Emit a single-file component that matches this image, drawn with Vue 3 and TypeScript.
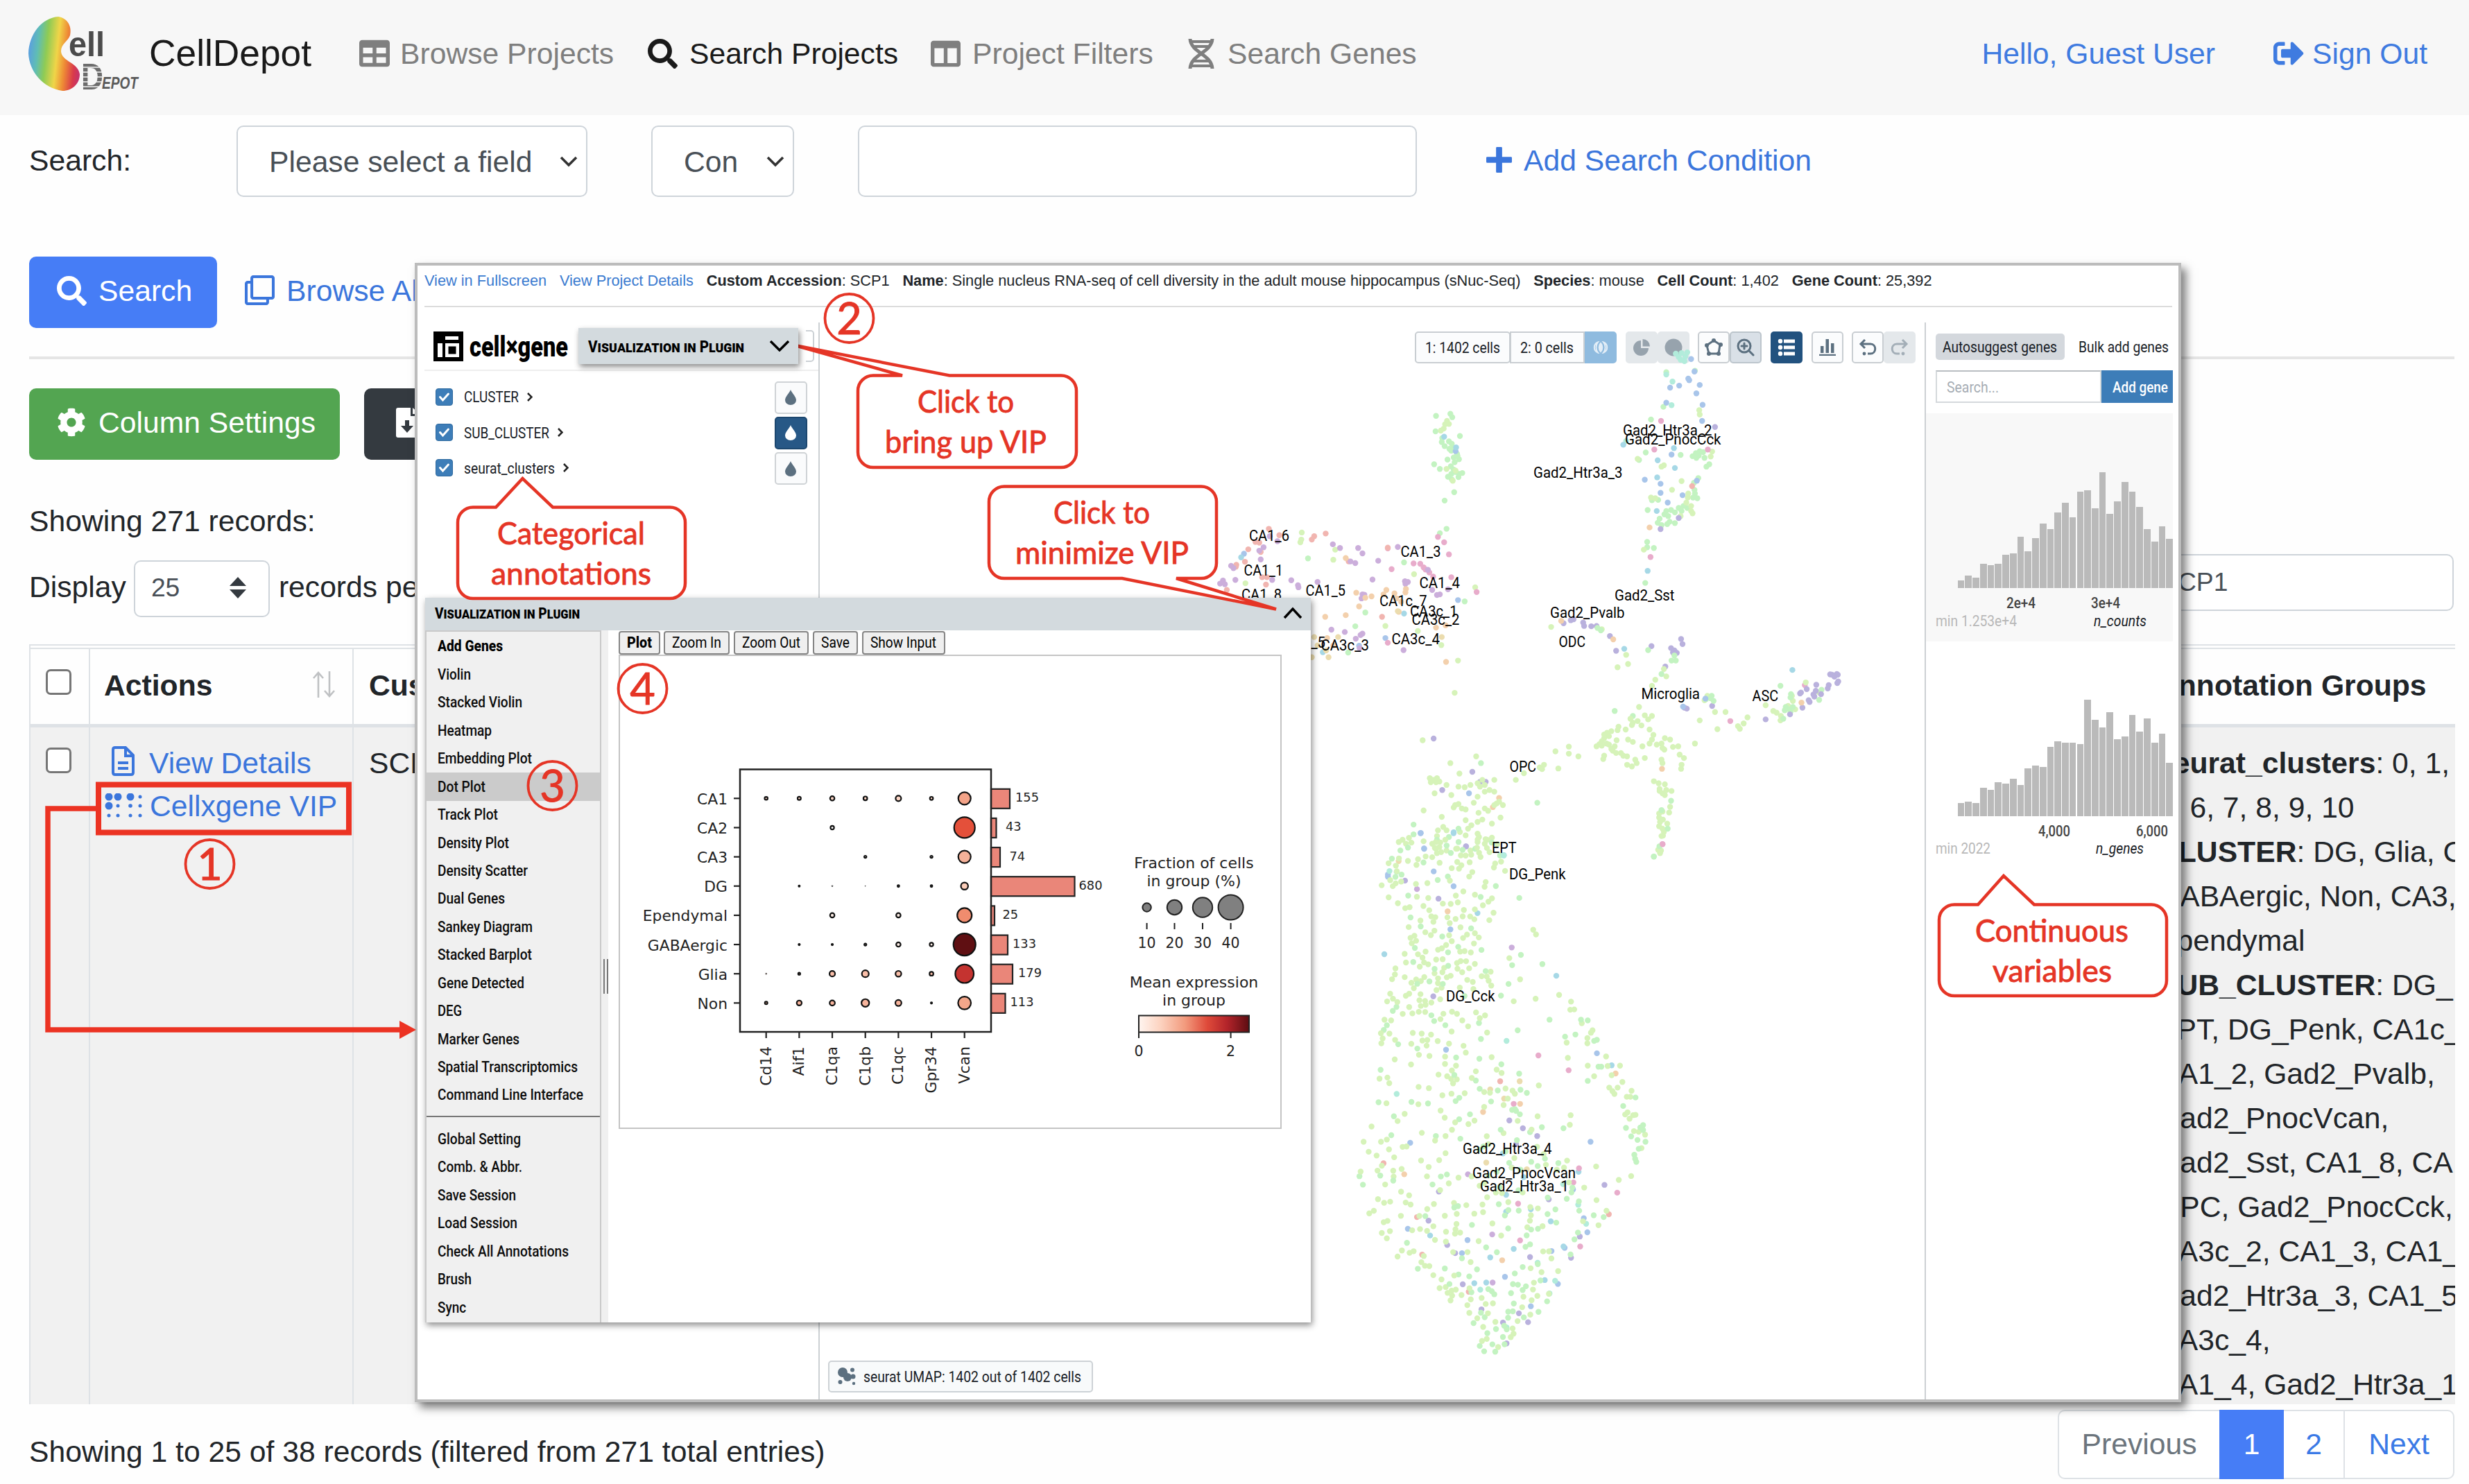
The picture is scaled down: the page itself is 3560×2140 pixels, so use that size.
<script setup lang="ts">
import { h, type FunctionalComponent } from 'vue'

/* Single-line label stretched to an exact advance width; its box is the cap height. */
const Fit: FunctionalComponent<{ t: string; w: number; s?: number }> = (p) => {
  const s = p.s ?? 22
  return h('svg', { width: p.w, height: s * 0.72, style: { overflow: 'visible', flex: 'none', display: 'block' } }, [
    h('text', { x: 0, y: s * 0.72, 'font-size': s, fill: 'currentColor', textLength: p.w, lengthAdjust: 'spacingAndGlyphs' }, p.t),
  ])
}
Fit.props = ['t', 'w', 's']

const faPaths: Record<string, string> = {
  search: 'M505 442.7L405.3 343c-4.5-4.5-10.6-7-17-7H372c27.6-35.3 44-79.7 44-128C416 93.1 322.9 0 208 0S0 93.1 0 208s93.1 208 208 208c48.3 0 92.7-16.4 128-44v16.3c0 6.4 2.5 12.5 7 17l99.7 99.7c9.4 9.4 24.6 9.4 33.9 0l28.3-28.3c9.4-9.4 9.4-24.6.1-34zM208 336c-70.7 0-128-57.2-128-128 0-70.7 57.2-128 128-128 70.7 0 128 57.2 128 128 0 70.7-57.2 128-128 128z',
  table: 'M464 32H48C21.49 32 0 53.49 0 80v352c0 26.51 21.49 48 48 48h416c26.51 0 48-21.49 48-48V80c0-26.51-21.49-48-48-48zM224 416H64v-96h160v96zm0-160H64v-96h160v96zm224 160H288v-96h160v96zm0-160H288v-96h160v96z',
  columns: 'M464 32H48C21.49 32 0 53.49 0 80v352c0 26.51 21.49 48 48 48h416c26.51 0 48-21.49 48-48V80c0-26.51-21.49-48-48-48zM224 416H64V160h160v256zm224 0H288V160h160v256z',
  cog: 'M487.4 315.7l-42.6-24.6c4.3-23.2 4.3-47 0-70.2l42.6-24.6c4.9-2.8 7.1-8.6 5.5-14-11.1-35.6-30-67.8-54.7-94.6-3.8-4.1-10-5.1-14.8-2.3L380.8 110c-17.9-15.4-38.5-27.3-60.8-35.1V25.8c0-5.6-3.9-10.5-9.4-11.7-36.7-8.2-74.3-7.8-109.2 0-5.5 1.2-9.4 6.1-9.4 11.7V75c-22.2 7.9-42.8 19.8-60.8 35.1L88.7 85.5c-4.9-2.8-11-1.9-14.8 2.3-24.7 26.7-43.6 58.9-54.7 94.6-1.7 5.4.6 11.2 5.5 14L67.3 221c-4.3 23.2-4.3 47 0 70.2l-42.6 24.6c-4.9 2.8-7.1 8.6-5.5 14 11.1 35.6 30 67.8 54.7 94.6 3.8 4.1 10 5.1 14.8 2.3l42.6-24.6c17.9 15.4 38.5 27.3 60.8 35.1v49.2c0 5.6 3.9 10.5 9.4 11.7 36.7 8.2 74.3 7.8 109.2 0 5.5-1.2 9.4-6.1 9.4-11.7v-49.2c22.2-7.9 42.8-19.8 60.8-35.1l42.6 24.6c4.9 2.8 11 1.9 14.8-2.3 24.7-26.7 43.6-58.9 54.7-94.6 1.5-5.5-.7-11.3-5.6-14.1zM256 336c-44.1 0-80-35.9-80-80s35.9-80 80-80 80 35.9 80 80-35.9 80-80 80z',
  signout: 'M497 273L329 441c-15 15-41 4.5-41-17v-96H152c-13.3 0-24-10.7-24-24v-96c0-13.3 10.7-24 24-24h136V88c0-21.4 25.9-32 41-17l168 168c9.3 9.4 9.3 24.6 0 34zM192 436v-40c0-6.6-5.4-12-12-12H96c-17.7 0-32-14.3-32-32V160c0-17.7 14.3-32 32-32h84c6.6 0 12-5.4 12-12V76c0-6.6-5.4-12-12-12H96c-53 0-96 43-96 96v192c0 53 43 96 96 96h84c6.6 0 12-5.4 12-12z',
  clone: 'M464 0H144c-26.51 0-48 21.49-48 48v48H48c-26.51 0-48 21.49-48 48v320c0 26.51 21.49 48 48 48h320c26.51 0 48-21.49 48-48v-48h48c26.51 0 48-21.49 48-48V48c0-26.51-21.49-48-48-48zM362 464H54a6 6 0 0 1-6-6V150a6 6 0 0 1 6-6h42v224c0 26.51 21.49 48 48 48h224v42a6 6 0 0 1-6 6zm96-96H150a6 6 0 0 1-6-6V54a6 6 0 0 1 6-6h308a6 6 0 0 1 6 6v308a6 6 0 0 1-6 6z',
  plus: 'M220 36h72q16 0 16 16v152h152q16 0 16 16v72q0 16-16 16H308v152q0 16-16 16h-72q-16 0-16-16V308H52q-16 0-16-16v-72q0-16 16-16h152V52q0-16 16-16z',
}
const Fa: FunctionalComponent<{ n: string; s?: number }> = (p) =>
  h('svg', { width: p.s ?? 43, height: p.s ?? 43, viewBox: '0 0 512 512', style: { flex: 'none', display: 'block' } }, [
    h('path', { d: faPaths[p.n], fill: 'currentColor' }),
  ])
Fa.props = ['n', 's']

const groups: { b?: string; t: string }[] = [
  { b: 'seurat_clusters', t: ': 0, 1,' },
  { t: '5, 6, 7, 8, 9, 10' },
  { b: 'CLUSTER', t: ': DG, Glia, C' },
  { t: 'GABAergic, Non, CA3,' },
  { t: 'Ependymal' },
  { b: 'SUB_CLUSTER', t: ': DG_' },
  { t: 'EPT, DG_Penk, CA1c_' },
  { t: 'CA1_2, Gad2_Pvalb,' },
  { t: 'Gad2_PnocVcan,' },
  { t: 'Gad2_Sst, CA1_8, CA' },
  { t: 'OPC, Gad2_PnocCck,' },
  { t: 'CA3c_2, CA1_3, CA1_' },
  { t: 'Gad2_Htr3a_3, CA1_5' },
  { t: 'CA3c_4,' },
  { t: 'CA1_4, Gad2_Htr3a_1' },
]

const menuTop: [string, number][] = [
  ['Add Genes', 94], ['Violin', 48], ['Stacked Violin', 122], ['Heatmap', 78], ['Embedding Plot', 136],
  ['Dot Plot', 69], ['Track Plot', 87], ['Density Plot', 103], ['Density Scatter', 130], ['Dual Genes', 97],
  ['Sankey Diagram', 137], ['Stacked Barplot', 136], ['Gene Detected', 125], ['DEG', 35], ['Marker Genes', 118],
  ['Spatial Transcriptomics', 202], ['Command Line Interface', 210],
]
const menuBottom: [string, number][] = [
  ['Global Setting', 120], ['Comb. & Abbr.', 122], ['Save Session', 113], ['Load Session', 115],
  ['Check All Annotations', 189], ['Brush', 49], ['Sync', 41],
]
const tools: [string, number, number][] = [
  ['Plot', 36, 59.5], ['Zoom In', 71, 95], ['Zoom Out', 84, 108.5], ['Save', 41, 65], ['Show Input', 95, 120],
]
const cats: [string, number][] = [['CLUSTER', 79], ['SUB_CLUSTER', 123], ['seurat_clusters', 131]]

/* Dot plot data: radius and fill per gene, group size in the bar */
const genes = ['Cd14', 'Aif1', 'C1qa', 'C1qb', 'C1qc', 'Gpr34', 'Vcan']
interface Row { n: string; c: number; bar: number; lx: number; r: number[]; f: string; tint: string }
const rows: Row[] = [
  { n: 'CA1', c: 155, bar: 27, lx: 1464, r: [2.2, 2.4, 3.2, 2.8, 4, 2.3, 9], f: '#f3a388', tint: '#fbd5c5' },
  { n: 'CA2', c: 43, bar: 7.5, lx: 1450, r: [0, 0, 2.6, 0, 0, 0, 15], f: '#e4503a', tint: '#fff' },
  { n: 'CA3', c: 74, bar: 13, lx: 1455.5, r: [0, 0, 0, 1.6, 0, 1.6, 9], f: '#f4b199', tint: '#fff' },
  { n: 'DG', c: 680, bar: 120.5, lx: 1555.5, r: [0, 0.9, 0.8, 0.4, 1.3, 1.3, 5.2], f: '#fbcdb9', tint: '#fff' },
  { n: 'Ependymal', c: 25, bar: 5, lx: 1445.5, r: [0, 0, 3.2, 0, 3.2, 0, 10.5], f: '#f08c6e', tint: '#fdeee6' },
  { n: 'GABAergic', c: 133, bar: 24, lx: 1460, r: [0, 1, 1, 1.5, 3.2, 2.6, 16], f: '#5f0f12', tint: '#fdeee6' },
  { n: 'Glia', c: 179, bar: 31, lx: 1468, r: [0.8, 1.5, 4, 5, 4.2, 2.8, 13.3], f: '#c43330', tint: '#f9bea8' },
  { n: 'Non', c: 113, bar: 20.5, lx: 1456.5, r: [1.9, 3.6, 3.8, 5.6, 4.4, 1, 9.3], f: '#f2a68a', tint: '#f7b49c' },
]
const rowY = (i: number) => 1151.3 + i * 42.15
const colX = (i: number) => 1104.7 + i * 47.67

/* Histogram bin heights */
const hCounts = [21, 36, 29, 68, 64, 68, 95, 99, 146, 103, 142, 182, 166, 214, 241, 201, 273, 277, 225, 328, 209, 245, 300, 273, 229, 166, 131, 174, 139]
const hGenes = [36, 40, 36, 79, 74, 96, 92, 104, 87, 134, 143, 139, 195, 211, 207, 207, 202, 328, 272, 250, 293, 216, 225, 285, 238, 276, 207, 233, 151]

/* UMAP embedding */
const hue: Record<string, string> = {
  g: '#d6f3b9', m: '#c3f3c1', t: '#b2ecdb', c: '#a6d8e6', b: '#a8c5ea', p: '#b9b1dd', v: '#cbaedb', k: '#e8accb', r: '#f1b5b0', o: '#f3d0ac', y: '#ebdcae',
}
type Pt = { x: number; y: number; c: string }
const pts: Pt[] = []
function add(src: string, ox: number, oy: number, sx: number, sy: number) {
  for (const line of src.trim().split('\n')) {
    const [k, ...rest] = line.trim().split(' ')
    for (const q of rest) {
      const [x, y] = q.split(',').map(Number)
      pts.push({ x: ox + x * sx, y: oy + y * sy, c: hue[k] })
    }
  }
}
add(`
m 538,247 568,241 572,251 537,293 588,307 551,313 550,325 556,337 565,323 571,330 575,343 570,351 582,360 586,376 562,377 575,371 583,366 566,345 577,385 534,391 546,405 569,397 575,407 579,414 570,420 563,428 571,436 593,417 586,420 585,429 576,474 556,499 560,583 546,596 270,671 471,683 369,873 390,832 598,799 354,951
g 561,262 557,272 565,271 554,285 548,291 579,410 573,440 257,594 254,623 256,615 327,645 323,675 620,757 139,745 492,718 432,872 500,887 549,929 584,975 577,1071 560,405
b 579,352 584,795 377,931 136,657 432,908
c 555,309 580,341 471,835 130,668 301,950
m 1020,117 1080,113 1014,220 988,258 977,356 963,378 1050,363 1075,367 1083,372 1090,352 1097,355 1088,365 1082,358 1100,372 1104,398 1110,391 1087,432 1078,446 1079,467 1080,478 1076,490 1085,492 990,498 1003,497 981,527 1020,530 1030,527 1046,521 1052,530 1038,534 1016,540 1024,545 1006,553 1002,565 1010,572 1022,569 1027,562 1038,566 1064,521 1056,515 980,622 994,640 980,638 976,744
g 1090,243 1089,230 1116,353 1113,368 1010,398 1015,394 1052,441 1032,467 1066,478 1065,490 1072,515 1072,530 1075,537 1062,505 988,490 997,492 973,645 1050,545 960,375
t 1040,62 1046,72 1052,60 1060,70 1064,58 1050,80 1020,124 1033,145 1031,215 936,322 1058,84
b 1079,115 1066,136 1068,141 1047,157 1028,163 1090,155 1083,180 1020,208 1096,214 1095,262 1031,362 975,437 1008,449 1008,476 1054,483 1023,505 1084,440 1072,78
c 930,333 1036,343 1038,402 1002,379 1001,430 1000,530 981,708 932,940 1284,1003
p 1046,551 1008,584 1122,280 989,932 1051,911 1054,926 1030,938 1037,945 1034,951 1042,952 1018,993 846,862 848,872 863,873 874,872 902,902 915,946 533,1207 614,1306 630,1336 642,1336 551,1360 1116,1110 826,852 820,855 805,864 1058,1115 1063,1118
k 1009,262 995,347 1107,347 987,667 565,659 542,607 623,771 491,686 505,687 516,704 524,713 532,725 512,698 437,641 437,922 555,623 1310,1048 1154,1155 570,727 445,703
r 1074,456 307,597 283,605 278,615 160,622 168,624 145,644 171,652 120,690 119,696 138,681 188,583 174,727 184,727 182,749 100,765 355,680 210,602 425,845 437,639 84,782
v 190,605 206,620 177,638 168,648 171,674 109,693 114,700 118,735 92,737 86,746 96,748 235,736 249,751 250,757 322,629 337,640 375,640 384,656 369,685 359,680 290,741 417,678 405,734 384,778 382,790 388,779 473,739 479,741 474,747 384,895 380,899 319,883 347,890 470,944 521,705 530,765 546,778 540,780 563,763 458,637 195,735 378,938 370,910
o 985,579 349,670 371,773 403,784 434,765 428,778 451,775 475,762 474,772 455,790 306,845 377,814 349,840 558,870 538,877 559,979 909,912 800,857 310,908 323,930 1011,1297 670,1384 657,1411 460,830 465,800 390,788
y 458,828 313,965 550,905 283,905 290,930 308,945 333,905 278,965
g 779,875 885,882 936,958 940,985 918,995 997,1032 1020,1022 1015,1000 990,1050 510,1212 622,1260 568,1280 788,1245 816,1231 816,1252 836,1260 794,1296 764,1285 755,1293 760,1298 722,1310 705,1330 587,1311
m 876,878 883,885 982,944 1040,975 1031,975 1037,960 1010,1015 632,1280 750,1398 912,1125 950,1140 1259,1050
g 963,1113 975,1138 990,1140 982,1150 960,1155 950,1160 948,1167 968,1168 935,1180 920,1172 918,1182 896,1190 900,1200 890,1206 885,1215 880,1224 874,1230 885,1228 895,1222 905,1238 912,1230 908,1243 916,1212 925,1250 930,1258 915,1250 890,1258 888,1268 938,1260 940,1210 950,1217 970,1230 985,1222 990,1210 993,1196 1000,1225 1010,1222 1017,1206 1012,1235 1028,1210 1034,1232 1045,1230 1048,1255 1057,1265 1080,1222 975,1265 955,1270 958,1280 938,1285 948,1290 1010,1270 1012,1280 1051,1297 1052,1285 985,1180 905,1185 890,1195 900,1225 945,1148 1016,1240
g 1004,1340 1017,1343 1006,1357 1020,1360 1031,1363 994,1334 1012,1370 1006,1363 1028,1410 1012,1424 1005,1430 1026,1427 1005,1442 1013,1448 1007,1455 1022,1460 1005,1468 1012,1475 1010,1497 1015,1485 1003,1538 1007,1548 1017,1375
m 1030,1392 1023,1475 994,1558 1010,1420
g 1106,1080 1100,1093 1122,1128 1144,1128 1090,1153 1127,1179 1190,1144 1182,1162 1170,1170 1174,1178 1228,1108 1244,1125 1251,1130 1260,1140 1275,1110 1285,1095 1283,1080 1340,1070 1312,1040 1290,1120 1259,1153
m 1103,1090 1112,1087 1119,1095 1115,1080 1280,1085 1270,1113 1278,1120 1285,1113 1268,1123 1281,1075 1280,1128 1265,1148 1345,1062 1340,1092
b 1102,1088 1055,1112
p 1377,1015 1367,1017 1363,1016 1379,1017 1372,1023 1380,1037 1378,1042 1360,1048 1358,1058 1334,1047 1333,1065 1328,1076 1330,1082 1302,1070 1300,1073 1318,1093 1320,1098 1305,1115 1279,1135 1228,1150 1344,1075 1314,1060
o 1303,1100
k 1012,1521
g 525,1325 532,1330 540,1325 538,1337 527,1337 545,1335 560,1345 585,1350 598,1352 610,1345 625,1340 640,1345 650,1360 660,1365 640,1365 630,1350 570,1375 535,1370 625,1380 578,1405 585,1402 575,1412 592,1415 600,1418 512,1421 617,1398 627,1428 640,1415 647,1422 660,1405 665,1400 673,1442 655,1460 635,1448 625,1455 600,1450 612,1465 605,1475 550,1440 553,1470 542,1480 560,1480 540,1497 588,1485 600,1495 625,1490 628,1500 468,1508 475,1520 530,1520 545,1530 538,1535 580,1535 560,1540 540,1548 655,1502 645,1508 640,1520 625,1515 610,1540 460,1515 650,1545 600,1555 530,1560 635,1330 660,1330 670,1395 678,1405
m 565,1500 491,1463 491,1492 540,1508 585,1475 620,1535 672,1555
b 607,1370 506,1488 513,1534 601,1528
c 575,1486 680,1554
`, 1700, 480, 0.6888, 0.4847)
add(`
b 337,47 411,153 246,120 361,111 403,275 302,878 771,625 755,875 557,948 296,1121 432,1190 446,1153 540,1257 605,1340 673,1277 657,1184 747,1131 738,1091 711,1010 392,615 328,3 246,126 690,1175
c 471,229 237,345 669,406 411,3 808,659 543,1025 543,1073 605,1066 655,1100 562,1178 503,1202 640,1266 352,1140 463,1275 493,1273 687,1171 725,960 535,908 587,975
t 537,66 268,112 250,110 544,590 268,740 724,1053 744,1107 622,1217 666,1268 478,1293 544,1400 652,1304 686,995
p 442,40 373,188 289,137 551,815 585,837 621,859 374,1016 395,1167 348,1098 650,1038 603,1201 415,1190 434,1278 598,1385 544,1445 535,1386 481,1349 706,1203 728,1143 360,464 568,882 790,997 575,1360
v 319,161 557,326 447,967 508,1137 509,1273
k 624,631 700,673 562,768 573,1050 578,1154 729,1171 712,990 822,1019 726,950
r 235,936 319,1088 332,1194 449,1299 528,704 801,1080
o 396,224 578,768 485,791 818,682 287,967 533,1210
y 273,82 503,727 577,704 538,753 493,934 595,953
g 611,276 618,289 551,356 578,416 617,471 676,460 706,479 704,502 714,501 733,540 747,597 747,582 756,567 760,560 695,595 698,638 748,660 764,690 794,634 798,661 829,660 808,687 835,706 802,722 815,740 823,722 810,732 858,731 846,748 855,748 842,798 862,800 853,810 868,799 848,792 864,845 876,847 892,855 857,972 826,983 883,893 769,945 770,1040 775,1111 795,1070 705,800 703,827 625,716 622,803 562,478 499,420 490,518 937,10 932,52
m 481,333 455,272 576,186 580,347 558,376 634,373 549,429 530,462 652,530 572,560 731,530 748,532 717,572 691,578 771,587 764,590 775,663 782,663 748,703 868,750 837,774 844,836 857,860 880,835 887,828 887,842 893,875 873,870 876,895 865,912 867,923 870,932 788,1088 763,1083 687,837 595,737 579,728 603,848 914,69 928,40 565,783 558,785 568,788
k 936,34
`, 1860, 1200, 0.574, 0.5102)

/* Granule-cell body: outline given as [y, left, right] spans, filled with a seeded scatter */
const spans = [[15, 280, 520], [100, 240, 545], [190, 220, 545], [250, 290, 500], [320, 290, 470], [400, 258, 510], [500, 240, 500], [600, 208, 495], [700, 218, 600], [800, 192, 600], [900, 168, 710], [1000, 165, 740], [1100, 192, 740], [1200, 270, 715], [1300, 375, 670], [1370, 450, 620], [1430, 470, 560], [1470, 475, 520]]
let seed = 20417
const rnd = () => ((seed = (seed * 1103515245 + 12345) & 0x7fffffff) / 0x7fffffff)
const body: [number, number][] = []
for (let tries = 0; tries < 9000 && body.length < 540; tries++) {
  const y = 15 + rnd() * 1455
  const i = spans.findIndex((s, k) => k > 0 && s[0] >= y)
  if (i < 1) continue
  const a = spans[i - 1], b = spans[i]
  const f = (y - a[0]) / (b[0] - a[0])
  const l = a[1] + (b[1] - a[1]) * f, r = a[2] + (b[2] - a[2]) * f
  const x = l + rnd() * (r - l)
  const edge = (x - l) / (r - l)
  if (y > 430 && y < 900 && rnd() < (edge > 0.7 ? 0.5 : 0.1)) continue
  if (body.some(([u, v]) => Math.hypot(u - x, (v - y) * 0.9) < 10)) continue
  body.push([x, y])
  const k = rnd()
  const mint = x > 420 && y > 640 ? 0.5 : 0.2
  pts.push({ x: 1860 + x * 0.574, y: 1200 + y * 0.5102, c: k < mint ? hue.m : hue.g })
}

const labels: [string, number, number, number][] = [
  ['CA1_6', 1801, 779.5, 58], ['CA1_1', 1793.5, 829.5, 56.5], ['CA1_8', 1790, 864.5, 58], ['CA1_5', 1882.5, 858.5, 57.5],
  ['CA1_3', 2019.5, 803, 58], ['CA1_4', 2046.5, 848, 58.5], ['CA1c_7', 1989, 873.6, 68.5], ['CA3c_1', 2033, 888.6, 68.5],
  ['CA3c_2', 2035.5, 900.7, 69], ['CA3c_4', 2006.5, 929, 69.5], ['CA3c_3', 1904.5, 938, 69.5], ['CA1c_5', 1842, 934, 69],
  ['Gad2_Htr3a_3', 2211, 689, 128.5], ['Gad2_Htr3a_2', 2340, 628, 128.5], ['Gad2_PnocCck', 2343, 641, 138.5],
  ['Gad2_Sst', 2328, 866, 86.5], ['Gad2_Pvalb', 2235, 890.5, 107.5], ['ODC', 2247.5, 933, 38.5], ['Microglia', 2366.5, 1008, 84.5],
  ['ASC', 2526.5, 1011, 37.5], ['OPC', 2176.5, 1113, 38.5], ['EPT', 2151, 1230, 35.5], ['DG_Penk', 2176, 1268, 81.5],
  ['DG_Cck', 2085, 1444, 70.5], ['Gad2_Htr3a_4', 2109, 1664, 128.5], ['Gad2_PnocVcan', 2123, 1698.5, 149], ['Gad2_Htr3a_1', 2134, 1718, 128],
]

const steps: [string, number, number][] = [['1', 302.5, 1246], ['2', 1224.5, 459], ['3', 796.5, 1133], ['4', 926.5, 993]]
const notes: [string, number, number, number][] = [
  ['Categorical', 717, 785, 213], ['annotations', 708, 843, 231], ['Click to', 1323, 595, 139], ['bring up VIP', 1276, 653, 233],
  ['Click to', 1519, 755, 139], ['minimize VIP', 1464, 813, 250], ['Continuous', 2848, 1358, 221], ['variables', 2873, 1416, 172],
]
</script>

<template>
  <div class="page">
    <header class="nav">
      <svg class="logo" width="170" height="120" viewBox="36 20 170 120">
        <defs>
          <linearGradient id="rainbow" x1="0" y1="0.45" x2="1" y2="0.6">
            <stop offset="0" stop-color="#5b9fe0" /><stop offset="0.17" stop-color="#5fbdb5" /><stop offset="0.34" stop-color="#8ecb55" />
            <stop offset="0.55" stop-color="#f0d548" /><stop offset="0.72" stop-color="#ee8a35" /><stop offset="0.9" stop-color="#d93a4a" /><stop offset="1" stop-color="#c73367" />
          </linearGradient>
        </defs>
        <path d="M84 25C98 27 104 40 101 52C98 61 88 64 88 75C89 90 113 91 115 108C115 122 104 132 90 132C62 128 42 104 41 78C42 50 60 27 84 25Z" fill="url(#rainbow)" />
        <text x="99" y="82" font-family="Liberation Sans" font-size="50" font-weight="bold" fill="#4b4b4b" textLength="52" lengthAdjust="spacingAndGlyphs">ell</text>
        <text x="117" y="130" font-family="Liberation Sans" font-size="53" font-weight="bold" fill="#6c6c6c" textLength="32" lengthAdjust="spacingAndGlyphs">D</text>
        <text x="147" y="129" font-family="Liberation Sans" font-size="23" font-style="italic" font-weight="bold" fill="#5a5a5a" textLength="52" lengthAdjust="spacingAndGlyphs">EPOT</text>
        <path d="M119 98h26M119 105h28M119 112h28M119 119h28M119 126h24" stroke="#f7f7f7" stroke-width="1.4" />
      </svg>
      <span class="brand">CellDepot</span>
      <nav class="links">
        <a class="lk l1"><Fa n="table" :s="44" />Browse Projects</a>
        <a class="lk l2 on"><Fa n="search" :s="43" />Search Projects</a>
        <a class="lk l3"><Fa n="columns" :s="43" />Project Filters</a>
        <a class="lk l4">
          <svg width="40" height="43" viewBox="0 0 40 43" fill="none" stroke="currentColor" stroke-width="5">
            <path d="M4 0C5 20 35 22 36 43M36 0C35 20 5 22 4 43" /><path d="M5 4h30M8 11h24M8 32h24M5 39h30" stroke-width="4" />
          </svg>
          Search Genes
        </a>
      </nav>
      <a class="hello">Hello, Guest User</a>
      <a class="out"><Fa n="signout" :s="44" />Sign Out</a>
    </header>

    <section class="cond">
      <label class="clabel">Search:</label>
      <div class="sel s1"><span>Please select a field</span><svg width="28" height="18" viewBox="0 0 28 18"><path d="M3 3l11 11L25 3" /></svg></div>
      <div class="sel s2"><span>Con</span><svg width="28" height="18" viewBox="0 0 28 18"><path d="M3 3l11 11L25 3" /></svg></div>
      <div class="inp"></div>
      <a class="addc"><Fa n="plus" :s="43" />Add Search Condition</a>
    </section>

    <section class="go">
      <button class="btn blue"><Fa n="search" :s="43" />Search</button>
      <a class="browse"><Fa n="clone" :s="43" />Browse All</a>
    </section>
    <hr class="rule" />
    <section class="acts">
      <button class="btn green"><Fa n="cog" :s="42" />Column Settings</button>
      <button class="btn dark">
        <svg width="34" height="43" viewBox="0 0 34 43"><path d="M3 0h18v12h13v28q0 3-3 3H3q-3 0-3-3V3q0-3 3-3z" fill="#fff" /><path d="M24 0l10 9H24z" fill="#fff" /><path d="M13 18h6v8h6l-9 10-9-10h6z" fill="#343a40" /></svg>
        Export
      </button>
    </section>

    <p class="showing">Showing 271 records:</p>
    <section class="display">
      <span>Display</span>
      <div class="count"><span>25</span><svg width="24" height="31" viewBox="0 0 24 31"><path d="M12 0L24 13H0zM12 31L0 18h24z" fill="#343a40" /></svg></div>
      <span>records per page</span>
      <div class="filter">SCP1</div>
    </section>

    <section class="grid">
      <div class="row head">
        <div class="cell chk"><i></i></div>
        <div class="cell act"><b>Actions</b>
          <svg width="32" height="38" viewBox="0 0 32 38" fill="none" stroke="#bfc1c3" stroke-width="2.6"><path d="M8 38V2M1 10L8 2l7 8M24 0v36M17 28l7 8 7-8" /></svg>
        </div>
        <div class="cell cus"><b>Custom Accession</b></div>
        <div class="cell ann"><b>Annotation Groups</b></div>
      </div>
      <div class="row body">
        <div class="cell chk"><i></i></div>
        <div class="cell act">
          <a class="vd"><svg width="33" height="43" viewBox="0 0 33 43" fill="none" stroke="currentColor" stroke-width="4"><path d="M5 2h15l11 11v25q0 3-3 3H5q-3 0-3-3V5q0-3 3-3zM20 3v11h11M9 24h15M9 32h15" /></svg>View Details</a>
          <a class="cx">
            <svg width="54" height="36" viewBox="0 0 54 36" fill="currentColor">
              <circle cx="6" cy="5" r="5.5" /><circle cx="19" cy="5" r="5.5" /><circle cx="37" cy="5" r="5.5" /><circle cx="51" cy="5" r="2.5" />
              <circle cx="6" cy="18" r="5.5" /><circle cx="19" cy="18" r="2.5" /><circle cx="37" cy="18" r="2.8" /><circle cx="51" cy="18" r="2.5" />
              <circle cx="6" cy="32" r="2.5" /><circle cx="19" cy="32" r="2.5" /><circle cx="37" cy="32" r="2.5" /><circle cx="51" cy="32" r="2.5" />
            </svg>Cellxgene VIP</a>
        </div>
        <div class="cell cus">SCP1</div>
        <div class="cell ann"><p v-for="(g, i) in groups" :key="i"><b v-if="g.b">{{ g.b }}</b>{{ g.t }}</p></div>
      </div>
    </section>

    <footer class="foot">
      <span>Showing 1 to 25 of 38 records (filtered from 271 total entries)</span>
      <div class="pager"><span class="pv">Previous</span><span class="p1">1</span><span class="p2">2</span><span class="nx">Next</span></div>
    </footer>

    <div class="viewer">
      <div class="vhead">
        <a>View in Fullscreen</a><a>View Project Details</a>
        <span><b>Custom Accession</b>: SCP1</span>
        <span><b>Name</b>: Single nucleus RNA-seq of cell diversity in the adult mouse hippocampus (sNuc-Seq)</span>
        <span><b>Species</b>: mouse</span><span><b>Cell Count</b>: 1,402</span><span><b>Gene Count</b>: 25,392</span>
      </div>
      <div class="vline"></div>
      <div class="vbody">
        <aside class="left">
          <div class="brandrow">
            <svg width="43" height="43" viewBox="0 0 43 43"><path d="M0 0h43v43H0z" /><path d="M17 7h19v5H17zM6 17h7v20H6zM17 17h20v20H17zM21.500 21.500v11h11v-11z" fill="#fff" fill-rule="evenodd" /><path d="M22 22h10v10H22z" /></svg>
            <span class="cxg"><Fit t="cell×gene" :w="142" :s="40" /></span>
            <div class="vipbtn"><Fit t="Visualization in Plugin" :w="225" :s="23" class="sc" />
              <svg width="28" height="16" viewBox="0 0 28 16" fill="none" stroke="#000" stroke-width="3.500"><path d="M1 1l13 13L27 1" /></svg>
            </div>
            <i class="stub"></i>
          </div>
          <div v-for="(c, i) in cats" :key="c[0]" class="cat">
            <svg width="25" height="25" viewBox="0 0 25 25"><rect x="0.500" y="0.500" width="24" height="24" rx="3.500" fill="#3d7db8" stroke="#2f6a9f" /><path d="M6.500 12.500l4 4.500 8-9" fill="none" stroke="#fff" stroke-width="3" stroke-linecap="round" /></svg>
            <Fit :t="c[0]" :w="c[1]" :s="22" />
            <svg class="chev" width="8" height="13" viewBox="0 0 8 13" fill="none" stroke="#222" stroke-width="2.600"><path d="M1 1l5.500 5.500L1 12" /></svg>
            <div class="drop" :class="{ act: i === 1 }"><svg width="16" height="22" viewBox="0 0 16 22"><path d="M8 0C10 5 16 10 16 15a8 7 0 0 1-16 0C0 10 6 5 8 0z" fill="currentColor" /></svg></div>
          </div>
        </aside>

        <main class="canvas">
          <div class="tbar">
            <div class="bt" style="width:138px"><Fit t="1: 1402 cells" :w="108" /></div>
            <div class="bt mid" style="width:108px"><Fit t="2: 0 cells" :w="77" /></div>
            <div class="bt sub"><svg width="26" height="18" viewBox="0 0 26 18" fill="none" stroke="#e3eef7" stroke-width="2"><path d="M9 1.500a8 8 0 0 0 0 15C5.500 12 5.500 6 9 1.500zM17 1.500a8 8 0 0 1 0 15c3.500-4.500 3.500-10.500 0-15z" /><path d="M13 3c3 3 3 9 0 12-3-3-3-9 0-12z" fill="#e3eef7" /></svg></div>
            <div class="bt off g1"><svg width="24" height="24" viewBox="0 0 24 24" fill="#97a3ad"><path d="M11 2v11h11A11 11 0 1 1 11 2z" /><path d="M13.500 0A10.500 10.500 0 0 1 24 10.500H13.500z" /></svg></div>
            <div class="bt off"><svg width="26" height="26" viewBox="0 0 26 26"><circle cx="13" cy="13" r="12.500" fill="#97a3ad" /></svg></div>
            <div class="bt g2"><svg width="28" height="28" viewBox="0 0 28 28" fill="none" stroke="#5c7080" stroke-width="3"><path d="M14 4L23 10l-2 13H7L4 11z" /><g fill="#5c7080" stroke="none"><circle cx="14" cy="4" r="3" /><circle cx="24" cy="10" r="3" /><circle cx="21" cy="23" r="3" /><circle cx="7" cy="23" r="3" /><circle cx="4" cy="11" r="3" /></g></svg></div>
            <div class="bt on2"><svg width="26" height="26" viewBox="0 0 26 26" fill="none" stroke="#5c7080" stroke-width="3"><circle cx="11" cy="11" r="9" /><path d="M18 18l6 6M11 7v8M7 11h8" stroke-linecap="round" /></svg></div>
            <div class="bt navy g3"><svg width="26" height="26" viewBox="0 0 26 26" fill="#fff"><circle cx="4" cy="4" r="3.200" /><circle cx="4" cy="13" r="3.200" /><circle cx="4" cy="22" r="3.200" /><path d="M9 1.500h16v5H9zM9 10.500h16v5H9zM9 19.500h16v5H9z" /></svg></div>
            <div class="bt g3"><svg width="26" height="26" viewBox="0 0 26 26" fill="#5c7080"><path d="M3 11h4.500v10H3zM10.500 1H15v20h-4.500zM18 7h4.500v14H18zM1 22.800h24V25H1z" /></svg></div>
            <div class="bt g3"><svg width="26" height="24" viewBox="0 0 26 24" fill="none" stroke="#5c7080" stroke-width="3"><path d="M9 1L3 7l6 6M4 7h13c9 0 9 14 0 14h-4" /><circle cx="8" cy="21" r="2.400" fill="#5c7080" stroke="none" /></svg></div>
            <div class="bt off"><svg width="26" height="24" viewBox="0 0 26 24" fill="none" stroke="#a3aeb7" stroke-width="3"><path d="M17 1l6 6-6 6M22 7H9c-9 0-9 14 0 14h4" /><circle cx="18" cy="21" r="2.400" fill="#a3aeb7" stroke="none" /></svg></div>
          </div>
          <svg class="umap" width="1593" height="1553" viewBox="1182 465 1593 1553">
            <circle v-for="(p, i) in pts" :key="i" :cx="p.x" :cy="p.y" r="4.200" :fill="p.c" />
            <text v-for="l in labels" :key="l[0] + l[1]" :x="l[1]" :y="l[2]" font-size="22" :textLength="l[3]" lengthAdjust="spacingAndGlyphs">{{ l[0] }}</text>
          </svg>
          <div class="pill">
            <svg width="26" height="26" viewBox="0 0 26 26" fill="#5c7080"><circle cx="7" cy="7" r="7" /><circle cx="14" cy="14" r="6" /><circle cx="21" cy="3.500" r="3" /><circle cx="22" cy="13" r="3.500" /><circle cx="3.500" cy="21" r="3" /><circle cx="23" cy="23" r="2.200" /><path d="M14 11h8v5h-8z" /></svg>
            <Fit t="seurat UMAP: 1402 out of 1402 cells" :w="314" />
          </div>
        </main>

        <aside class="right">
          <div class="tabs"><span class="tab"><Fit t="Autosuggest genes" :w="165" /></span><Fit t="Bulk add genes" :w="130" /></div>
          <div class="gs"><span class="ph"><Fit t="Search..." :w="75" /></span><span class="ag"><Fit t="Add gene" :w="80" /></span></div>
          <div class="hist shade">
            <div class="bars"><i v-for="(v, i) in hCounts" :key="i" :style="{ height: v * 0.51 + 'px' }"></i></div>
            <div class="ticks t1"><Fit t="2e+4" :w="42" /><Fit t="3e+4" :w="42" /></div>
            <div class="cap c1"><span class="mn"><Fit t="min 1.253e+4" :w="117" /></span><em><Fit t="n_counts" :w="76" /></em></div>
          </div>
          <div class="hist">
            <div class="bars"><i v-for="(v, i) in hGenes" :key="i" :style="{ height: v * 0.51 + 'px' }"></i></div>
            <div class="ticks t2"><Fit t="4,000" :w="46" /><Fit t="6,000" :w="46" /></div>
            <div class="cap c2"><span class="mn"><Fit t="min 2022" :w="79" /></span><em><Fit t="n_genes" :w="69" /></em></div>
          </div>
        </aside>
      </div>

      <div class="vip">
        <div class="vbar"><Fit t="Visualization in Plugin" :w="209" :s="22" class="sc" />
          <svg width="28" height="18" viewBox="0 0 28 18" fill="none" stroke="#000" stroke-width="3.500"><path d="M2 16L14 3l12 13" /></svg>
        </div>
        <div class="vmain">
          <div class="menu">
            <div v-for="(m, i) in menuTop" :key="m[0]" class="mi" :class="{ sel5: i === 5, first: i === 0 }"><Fit :t="m[0]" :w="m[1]" :s="21.500" /></div>
            <div class="mh"></div>
            <div v-for="m in menuBottom" :key="m[0]" class="mi"><Fit :t="m[0]" :w="m[1]" :s="21.500" /></div>
          </div>
          <div class="grip"><i></i></div>
          <div class="work">
            <div class="tls"><button v-for="(t, i) in tools" :key="t[0]" :style="{ width: t[2] + 'px' }" :class="{ bold: i === 0 }"><Fit :t="t[0]" :w="t[1]" :s="21.500" /></button></div>
            <svg class="plot" viewBox="894 946 952 680" font-family="DejaVu Sans" fill="#222">
              <defs><linearGradient id="reds"><stop offset="0" stop-color="#fff5f0" /><stop offset="0.2" stop-color="#fcd2bf" /><stop offset="0.42" stop-color="#f29a7d" /><stop offset="0.62" stop-color="#df4a3a" /><stop offset="0.8" stop-color="#b3242a" /><stop offset="1" stop-color="#5c0d12" /></linearGradient></defs>
              <g v-for="(r, i) in rows" :key="r.n">
                <path :d="`M1058 ${rowY(i)}h9`" stroke="#222" stroke-width="2.200" />
                <text x="1049" :y="rowY(i) + 8.500" font-size="21.800" text-anchor="end">{{ r.n }}</text>
                <rect x="1429" :y="rowY(i) - 13.500" :width="r.bar" height="28" fill="#ea8679" stroke="#222" stroke-width="2.200" />
                <text :x="r.lx" :y="rowY(i) + 5" font-size="17.800">{{ r.c }}</text>
                <template v-for="(d, j) in r.r" :key="j">
                  <circle v-if="d > 0" :cx="colX(j)" :cy="rowY(i)" :r="d" :fill="j === 6 ? r.f : r.tint" stroke="#111" :stroke-width="d < 0.900 ? 0.900 : 2.200" />
                </template>
              </g>
              <g v-for="(g, j) in genes" :key="g">
                <path :d="`M${colX(j)} 1488v9`" stroke="#222" stroke-width="2.200" />
                <text :transform="`translate(${colX(j) + 7} 1509) rotate(-90)`" font-size="21.800" text-anchor="end">{{ g }}</text>
              </g>
              <rect x="1067" y="1109.500" width="362" height="378.500" fill="none" stroke="#222" stroke-width="2.500" />
              <g font-size="22" text-anchor="middle">
                <text x="1721.500" y="1252">Fraction of cells</text><text x="1721.500" y="1278">in group (%)</text>
                <g fill="#808080" stroke="#222" stroke-width="2"><circle cx="1653.600" cy="1308.500" r="6.200" /><circle cx="1693.500" cy="1308.500" r="10.700" /><circle cx="1734" cy="1308.500" r="14.200" /><circle cx="1774.600" cy="1308.500" r="18" /></g>
                <path d="M1653.600 1331v9M1693.500 1331v9M1734 1331v9M1774.600 1331v9M1642 1489v8M1774.600 1489v8" stroke="#222" stroke-width="2" />
                <g font-size="20.500"><text x="1653.600" y="1367">10</text><text x="1693.500" y="1367">20</text><text x="1734" y="1367">30</text><text x="1774.600" y="1367">40</text><text x="1642" y="1523">0</text><text x="1774.600" y="1523">2</text></g>
                <text x="1721.500" y="1424">Mean expression</text><text x="1721.500" y="1450">in group</text>
              </g>
              <rect x="1642" y="1464.500" width="159" height="24" fill="url(#reds)" stroke="#222" stroke-width="2" />
            </svg>
          </div>
        </div>
      </div>
    </div>

    <svg class="marks" width="3560" height="2140" viewBox="0 0 3560 2140" fill="none" stroke="#e53526" stroke-width="4.500">
      <rect x="142" y="1131.500" width="361" height="69" stroke-width="8" stroke="#ec3323" />
      <path d="M138 1166H69v319h512" stroke-width="7.500" stroke="#ec3323" />
      <path d="M576 1472l24 13-24 13z" fill="#ec3323" stroke="none" />
      <path d="M682 731.500H715L753.500 690L797 731.500H966a22 22 0 0 1 22 22V841a22 22 0 0 1-22 22H682a22 22 0 0 1-22-22V753.500a22 22 0 0 1 22-22z" fill="#fff" />
      <path d="M1259 541.500H1301L1146 498L1369 541.500H1530a22 22 0 0 1 22 22V652a22 22 0 0 1-22 22H1259a22 22 0 0 1-22-22V563.500a22 22 0 0 1 22-22z" fill="#fff" />
      <path d="M1448 701.500H1732a22 22 0 0 1 22 22V812a22 22 0 0 1-22 22H1696L1840 878.500L1618 834H1448a22 22 0 0 1-22-22V723.500a22 22 0 0 1 22-22z" fill="#fff" />
      <path d="M2818 1304.500H2852L2889 1263L2933 1304.500H3102a22 22 0 0 1 22 22V1414a22 22 0 0 1-22 22H2818a22 22 0 0 1-22-22V1326.500a22 22 0 0 1 22-22z" fill="#fff" />
      <g v-for="s in steps" :key="s[0]">
        <circle :cx="s[1]" :cy="s[2]" r="35" stroke-width="3.800" />
        <text :x="s[1]" :y="s[2] + 23" text-anchor="middle" font-size="63" fill="#e53526" stroke="#e53526" stroke-width="1">{{ s[0] }}</text>
      </g>
      <text v-for="(n, i) in notes" :key="i" :x="n[1]" :y="n[2]" :textLength="n[3]" lengthAdjust="spacingAndGlyphs" font-size="45" fill="#e53526" stroke="#e53526" stroke-width="0.900">{{ n[0] }}</text>
    </svg>
  </div>
</template>

<style>
html, body { margin: 0; background: #fff; }
</style>
<style scoped>
.page { position: relative; width: 3560px; height: 2140px; overflow: hidden; background: #fefefe; font-family: "Liberation Sans", Arial, sans-serif; font-size: 42.67px; line-height: 64px; color: #212529; white-space: nowrap; }
.page *, .page { box-sizing: border-box; }
p { margin: 0; }
button { font: inherit; border: 0; margin: 0; padding: 0; }
.nav { height: 166px; padding: 0 60px 12px 36px; background: #f7f7f7; display: flex; align-items: center; }
.logo { margin-right: 9px; margin-top: 4px; }
.brand { font-size: 53.3px; width: 303px; color: #1a1a1a; }
.links { display: flex; color: #7f7f7f; }
.lk { display: flex; align-items: center; }
.on { color: #1a1a1a; }
.l1 { gap: 15px; width: 416px; }
.l2 { gap: 17px; width: 408px; }
.l3 { gap: 17px; width: 370px; }
.l4 { gap: 18px; }
.hello { margin-left: auto; color: #3f7be0; }
.out { color: #3f7be0; display: flex; align-items: center; gap: 12px; margin-left: 84px; }
.cond { margin-top: 15px; padding-left: 42px; display: flex; align-items: center; height: 103px; }
.clabel { width: 299px; margin-top: -4px; }
.sel { height: 103px; border: 2px solid #ced4da; border-radius: 10px; background: #fff; color: #495057; display: flex; align-items: center; justify-content: space-between; padding: 0 11px 0 45px; }
.sel svg { fill: none; stroke: #333; stroke-width: 3.6; }
.s1 { width: 506px; }
.s2 { width: 206px; margin-left: 92px; }
.inp { width: 806px; height: 103px; margin-left: 92px; border: 2px solid #ced4da; border-radius: 10px; background: #fff; }
.addc { margin-left: 97px; margin-top: -4px; display: flex; align-items: center; gap: 14px; color: #3b76dc; }
.go { margin-top: 86px; padding-left: 42px; display: flex; align-items: center; height: 103px; }
.btn { display: flex; align-items: center; height: 103px; border-radius: 10px; color: #fff; gap: 17px; padding: 0 0 5px 40px; }
.blue { width: 271px; background: #467df6; }
.browse { margin: -6px 0 0 40px; display: flex; align-items: center; gap: 17px; color: #3b76dc; }
.rule { margin: 41px 21px 0 42px; border: 0; height: 4px; background: #e5e5e5; }
.acts { margin-top: 42px; padding-left: 42px; display: flex; }
.green { width: 448px; background: #53a551; gap: 18px; }
.dark { width: 300px; margin-left: 35px; background: #343a40; padding-left: 46px; }
.showing { margin: 56px 0 0 42px; }
.display { margin-top: 25px; height: 82px; padding: 0 22px 0 42px; display: flex; align-items: center; }
.display > span { margin-top: -7px; }
.count { width: 196px; height: 82px; margin: 0 13px 0 11px; border: 2px solid #ced4da; border-radius: 10px; background: #fff; display: flex; align-items: center; justify-content: space-between; padding: 0 32px 4px 23px; color: #495057; font-size: 37.3px; }
.filter { margin: -18px 0 0 auto; width: 443px; height: 82px; border: 2px solid #ced4da; border-radius: 10px; background: #fff; color: #495057; font-size: 37.3px; line-height: 76px; padding-left: 18px; }
.grid { margin: 39px 20px 0 42px; height: 1096px; border: 2px solid #dee2e6; border-right: 0; border-bottom: 0; overflow: hidden; }
.row { display: flex; }
.head { margin-top: 3px; border-top: 2px solid #dee2e6; height: 110px; }
.body { border-top: 5px solid #dee2e6; background: #f1f1f1; height: 982px; }
.cell { border-left: 2px solid #dee2e6; flex: none; overflow: hidden; }
.chk { width: 84px; border: 0; padding: 29px 0 0 22px; }
.body .chk { padding-top: 29px; }
.chk i { display: block; width: 37px; height: 37px; border: 3px solid #767676; border-radius: 7px; background: #fff; }
.act { width: 380px; }
.head .act { display: flex; justify-content: space-between; padding: 20px 25px 0 20px; }
.head .act svg { margin-top: 12px; }
.body .act { padding-top: 19px; color: #3b76dc; }
.vd { display: flex; align-items: center; padding-left: 31px; gap: 21px; height: 64px; }
.vd svg { margin-top: -6px; }
.cx { display: flex; align-items: center; padding-left: 21px; gap: 11px; height: 60px; }
.cus { width: 2580px; padding-left: 22px; }
.head .cus, .head .ann { padding-top: 20px; }
.body .cus, .body .ann { padding-top: 19px; }
.ann { flex: 1; border: 0; padding-left: 22px; }
.foot { margin-top: 8px; padding: 0 21px 0 42px; height: 100px; display: flex; justify-content: space-between; align-items: center; }
.foot > span { margin-bottom: -19px; }
.pager { display: flex; height: 100px; width: 572px; border: 2px solid #dee2e6; border-radius: 10px; line-height: 95px; color: #3b7ae6; text-align: center; background: #fff; }
.pv { width: 231px; color: #6c757d; }
.p1 { width: 93px; background: #467df6; color: #fff; margin: -2px 0; line-height: 99px; }
.p2 { width: 88px; border-right: 2px solid #dee2e6; }
.nx { flex: 1; }

.viewer { position: absolute; left: 598px; top: 379px; width: 2547px; height: 1643px; border: 4px solid #bcbcbc; background: #fff; box-shadow: 7px 8px 12px rgba(0, 0, 0, .5); font-size: 21.76px; line-height: 43px; }
.vhead { height: 42px; padding-left: 10px; display: flex; gap: 18.8px; }
.vhead a { color: #3b7bd0; }
.vline { margin: 16px 9px 0 10px; height: 2px; background: #dcdcdc; }
.vbody { display: flex; height: 1553px; margin-top: 22px; font-family: Roboto, sans-serif; color: #182026; }
.left { width: 580px; border-right: 2px solid #ccd0d3; padding-left: 10px; }
.brandrow { height: 70px; display: flex; align-items: center; border-bottom: 2px solid #eee; padding-left: 13px; margin-bottom: 11.5px; }
.cxg { margin: 0 15px 0 9px; font-weight: 900; color: #000; }
.vipbtn { width: 317px; height: 52px; background: #d3dade; box-shadow: 2px 4px 8px rgba(0, 0, 0, .45); display: flex; align-items: center; justify-content: space-between; padding: 0 13px 0 14px; color: #000; z-index: 1; }
.sc { font-variant: small-caps; font-weight: 800; }
.stub { width: 12px; height: 46px; border: 2px solid #ccd1d5; border-left: 0; border-radius: 0 5px 5px 0; margin-left: 11px; }
.cat { display: flex; align-items: center; height: 51.3px; padding-left: 16px; }
.cat > svg:nth-child(2) { margin-left: 16px; }
.chev { margin-left: 12px; }
.drop { margin: 2px 16px 0 auto; width: 47px; height: 47px; border: 2px solid #cfd3d6; border-radius: 5px; background: #fafbfc; color: #5c7080; display: flex; align-items: center; justify-content: center; }
.drop.act { background: #275886; border-color: #1c476f; color: #fff; width: 47px; }
.canvas { width: 1594px; position: relative; }
.tbar { display: flex; padding: 13px 0 0 858px; }
.bt { width: 46px; height: 46px; border: 2px solid #c9ced2; border-radius: 5px; background: #fbfcfd; display: flex; align-items: center; justify-content: center; flex: none; }
.bt.mid { margin-left: -1px; border-radius: 0; }
.bt.sub { background: #8fbbdf; border-color: #8fbbdf; border-radius: 0 5px 5px 0; }
.bt.off { background: #e4e8eb; border-color: #e4e8eb; }
.g1 { margin-left: 13px; }
.g2 { margin-left: 12.5px; }
.bt.on2 { background: #d9e0e7; border-color: #bcc5cc; }
.g3 { margin-left: 12.7px; }
.bt.navy { background: #22527f; border-color: #22527f; }
.umap { position: absolute; left: 0; top: 0; fill: #000; }
.pill { position: absolute; left: 12px; bottom: 10px; width: 382px; height: 46px; border: 2px solid #cdd2d6; border-radius: 5px; background: #f8fafb; display: flex; align-items: center; gap: 11px; padding-left: 12px; }
.right { flex: 1; border-left: 2px solid #ccd0d3; padding-right: 8px; }
.tabs { display: flex; align-items: center; margin: 16px 0 15px 14px; height: 38px; }
.tab { width: 186px; height: 38px; background: #d4d8dd; border-radius: 5px; display: flex; align-items: center; justify-content: center; margin-right: 20px; }
.gs { margin-left: 14px; height: 47px; display: flex; }
.ph { width: 239px; border: 2px solid #d5d9dc; border-top-color: #b9bec2; display: flex; align-items: center; padding-left: 14px; color: #a6adb4; }
.ag { flex: 1; background: #3d7db8; color: #fff; display: flex; align-items: center; padding-left: 16px; font-weight: 500; }
.hist { height: 328.5px; overflow: hidden; }
.shade { background: #f8f8f8; margin-top: 15px; }
.bars { height: 252px; display: flex; align-items: flex-end; padding-left: 46px; gap: 1.05px; }
.bars i { width: 9.7px; flex: none; background: #bababa; }
.ticks { display: flex; padding-top: 13px; color: #444; font-weight: 500; }
.t1 { padding-left: 116px; gap: 80px; }
.t2 { padding-left: 162px; gap: 95px; }
.cap { display: flex; margin: 10px 0 0 14px; }
.mn { color: #b8b8b8; }
.c1 em { margin-left: 111px; }
.c2 em { margin-left: 152px; }

.vip { position: absolute; left: 11px; top: 479px; width: 1277px; height: 1045px; background: #fff; box-shadow: 2px 4px 9px rgba(0, 0, 0, .45); font-family: Roboto, sans-serif; color: #111; display: flex; flex-direction: column; }
.vbar { height: 47px; background: #d3dade; display: flex; align-items: center; justify-content: space-between; padding: 0 12px 3px 14px; color: #000; flex: none; }
.vmain { display: flex; flex: 1; }
.menu { width: 254px; background: #f0f0f0; border: 2px solid #c9c9c9; border-bottom: 0; padding-top: 1px; color: #0c0c0c; font-weight: 500; }
.mi { height: 40.45px; display: flex; align-items: center; padding-left: 16px; }
.first { font-weight: 800; color: #000; }
.sel5 { background: #cbcbcb; }
.mh { height: 2px; background: #777; margin: 10px 0 11px; }
.grip { width: 10px; background: #f0f0f0; display: flex; align-items: center; justify-content: flex-end; }
.grip i { width: 7px; height: 50px; border: solid #777; border-width: 0 2px; }
.work { padding: 1px 0 0 15px; }
.tls { display: flex; gap: 5.7px; }
.tls button { height: 34px; background: #efefef; border: 2px solid #858585; border-radius: 4px; color: #000; display: flex; align-items: center; justify-content: center; flex: none; }
.tls .bold { font-weight: 800; }
.plot { display: block; border: 2px solid #c4c4c4; width: 956px; height: 684px; }
.marks { position: absolute; left: 0; top: 0; font-family: Lato, sans-serif; }
</style>
